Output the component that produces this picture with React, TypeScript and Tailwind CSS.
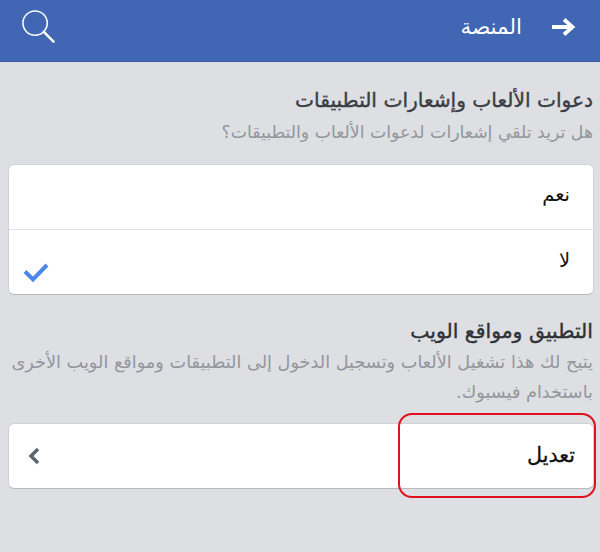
import React from 'react';

const FONT = "font-['DejaVu_Sans','Noto_Sans',sans-serif]";

const App: React.FC = () => {
    return (
        <div dir="rtl" className={`relative w-[600px] h-[552px] overflow-hidden bg-[#dddfe3] ${FONT}`}>
            {/* top bar */}
            <div className="flex h-[62px] items-center justify-between border-b border-[#3a5da5] bg-[#4166b3] pb-[8px] pl-[21px] pr-[24px]">
                <div className="flex items-center gap-[29px]">
                    <svg width="25" height="20" viewBox="0 0 25 20" fill="none" stroke="#fff" strokeWidth="3.8" strokeLinejoin="miter">
                        <path d="M1 10h20M13 2.5l8.5 7.5-8.5 7.5" />
                    </svg>
                    <span className="text-[21.5px] leading-none text-white">المنصة</span>
                </div>
                <svg width="35" height="35" viewBox="0 0 36 36" fill="none" stroke="#fff" strokeWidth="1.6" strokeLinecap="round">
                    <circle cx="14.5" cy="14.5" r="12.5" />
                    <path d="M23.5 23.5L33.5 33.5" strokeWidth="2.6" />
                </svg>
            </div>

            <div className="px-[7px]">
                <div className="pt-[23px]">
                    <h2 className="text-[20.2px] leading-[30px] text-[#3b3e44] [-webkit-text-stroke:0.4px_#3b3e44]">دعوات الألعاب وإشعارات التطبيقات</h2>
                    <p className="mt-[2px] text-[17.3px] leading-[30px] text-[#93969c]">هل تريد تلقي إشعارات لدعوات الألعاب والتطبيقات؟</p>
                </div>

                <div className="ml-[1px] -mr-[1px] mt-[17px] overflow-hidden rounded-[6px] border border-[#d0d1d5] border-b-[#b9babd] bg-white">
                    <div className="flex h-[65px] items-center border-b border-[#dddfe3] pr-[23px] pb-[4px] text-[19.5px] text-[#111]">نعم</div>
                    <div className="flex h-[64px] items-start justify-between pt-[16px] pr-[23px] pl-[14px] text-[19.5px] text-[#111]">
                        <span className="leading-[30px]">لا</span>
                        <svg width="26" height="20" viewBox="0 0 26 20" fill="none" stroke="#4b86ea" strokeWidth="4" className="mt-[17px]">
                            <path d="M2 8.5l8 8L24 2" />
                        </svg>
                    </div>
                </div>

                <div className="mt-[21px]">
                    <h2 className="text-[20.4px] leading-[30px] text-[#2f3136] [-webkit-text-stroke:0.4px_#2f3136]">التطبيق ومواقع الويب</h2>
                    <p className="mt-[1px] text-[17.7px] leading-[30px] text-[#93969c]">يتيح لك هذا تشغيل الألعاب وتسجيل الدخول إلى التطبيقات ومواقع الويب الأخرى باستخدام فيسبوك.</p>
                </div>

                <div className="ml-[1px] -mr-[1px] mt-[16px] flex h-[66px] items-center justify-between rounded-[6px] border border-[#d0d1d5] border-b-[#b9babd] bg-white pr-[18px] pl-[18px]">
                    <span className="text-[20.7px] text-[#111] [-webkit-text-stroke:0.3px_#111]">تعديل</span>
                    <svg width="14" height="20" viewBox="0 0 14 20" fill="none" stroke="#5c6270" strokeWidth="3.4">
                        <path d="M11 3l-7 7 7 7" />
                    </svg>
                </div>
            </div>

            {/* red annotation drawn over the screenshot */}
            <div className="absolute left-[398px] top-[413px] h-[85px] w-[198px] rounded-[14px] border-[2.5px] border-[#e0101e]" />
        </div>
    );
};

export default App;
